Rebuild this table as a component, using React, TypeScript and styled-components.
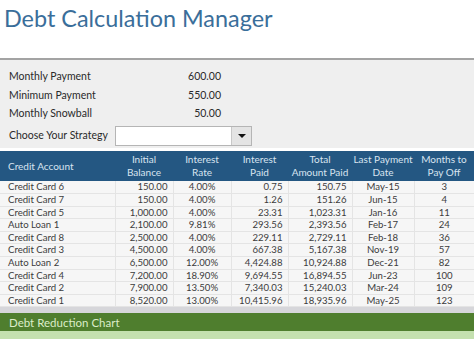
import React from "react";
import styled, { createGlobalStyle } from "styled-components";

const Global = createGlobalStyle`
  html, body { margin: 0; padding: 0; background: #ffffff; }
  body { font-family: Lato, "Open Sans", sans-serif; }
`;

const Page = styled.div`
  width: 474px;
  height: 339px;
  overflow: hidden;
  display: flex;
  flex-direction: column;
  background: #ffffff;
`;

const TitleBar = styled.div`
  height: 58px;
  box-sizing: content-box;
  padding: 0;
  border-bottom: 2px solid #a3a3a3;
  display: flex;
`;

const Title = styled.h1`
  margin: 3px 0 0 4px;
  font-family: Lato, sans-serif;
  font-weight: 400;
  font-size: 23.4px;
  line-height: 30px;
  color: #3a6e9a;
`;

const Summary = styled.div`
  background: #efefef;
  height: 88px;
  box-sizing: border-box;
  padding: 7px 0 0 9px;
  display: grid;
  grid-template-columns: 106px 137px;
  grid-template-rows: 18.5px 18.5px 18.5px auto;
  align-items: center;
  font-size: 10.5px;
  color: #2a2a2a;
`;

const Label = styled.div``;

const Value = styled.div`
  width: 106px;
  text-align: right;
`;

const Select = styled.div`
  margin-top: 2px;
  width: 137px;
  height: 20px;
  box-sizing: border-box;
  border: 1px solid #b5b5b5;
  background: #ffffff;
  display: flex;
  justify-content: flex-end;
`;

const SelectButton = styled.div`
  width: 19px;
  height: 100%;
  background: #e4e4e4;
  border-left: 1px solid #c8c8c8;
  display: flex;
  align-items: center;
  justify-content: center;
`;

const Arrow = styled.div`
  width: 0;
  height: 0;
  border-left: 4px solid transparent;
  border-right: 4px solid transparent;
  border-top: 4px solid #111;
`;

const Gap = styled.div`
  height: 3px;
  background: #ffffff;
`;

const Table = styled.table`
  width: 474px;
  border-collapse: collapse;
  table-layout: fixed;
  font-size: 9.6px;
`;

const HeadCell = styled.th<{ $left?: boolean }>`
  background: #245782;
  color: #d8e4f0;
  font-weight: 400;
  font-size: 10px;
  height: 30px;
  padding: ${(p) => (p.$left ? "0 0 0 8px" : "0")};
  text-align: ${(p) => (p.$left ? "left" : "center")};
  line-height: 13px;
  vertical-align: middle;
  white-space: nowrap;
`;

const Row = styled.tr`
  height: 12.6px;
`;

const Cell = styled.td<{ $align: "left" | "right" | "center" }>`
  background: #f6f6f6;
  color: #3c3c3c;
  border-bottom: 1px solid #e4e4e4;
  border-right: 1px solid #e4e4e4;
  padding: ${(p) => (p.$align === "left" ? "0 0 0 8px" : p.$align === "right" ? "0 5px 0 0" : "0")};
  text-align: ${(p) => p.$align};
  line-height: 11.6px;
  white-space: nowrap;
  &:last-child { border-right: none; }
`;

const GrayStrip = styled.div`
  height: 6px;
  background: #d6d6da;
`;

const ChartBar = styled.div`
  height: 18px;
  background: #4f7e2e;
  color: #dcecc9;
  font-size: 11.5px;
  display: flex;
  align-items: center;
  padding-left: 9px;
`;

const ChartBody = styled.div`
  flex: 1;
  background: #c4e0af;
`;

const widths = [115, 58, 58, 57, 64, 62, 60];

const rows: [string, string, string, string, string, string, string][] = [
  ["Credit Card 6", "150.00", "4.00%", "0.75", "150.75", "May-15", "3"],
  ["Credit Card 7", "150.00", "4.00%", "1.26", "151.26", "Jun-15", "4"],
  ["Credit Card 5", "1,000.00", "4.00%", "23.31", "1,023.31", "Jan-16", "11"],
  ["Auto Loan 1", "2,100.00", "9.81%", "293.56", "2,393.56", "Feb-17", "24"],
  ["Credit Card 8", "2,500.00", "4.00%", "229.11", "2,729.11", "Feb-18", "36"],
  ["Credit Card 3", "4,500.00", "4.00%", "667.38", "5,167.38", "Nov-19", "57"],
  ["Auto Loan 2", "6,500.00", "12.00%", "4,424.88", "10,924.88", "Dec-21", "82"],
  ["Credit Card 4", "7,200.00", "18.90%", "9,694.55", "16,894.55", "Jun-23", "100"],
  ["Credit Card 2", "7,900.00", "13.50%", "7,340.03", "15,240.03", "Mar-24", "109"],
  ["Credit Card 1", "8,520.00", "13.00%", "10,415.96", "18,935.96", "May-25", "123"],
];

const aligns: ("left" | "right" | "center")[] = ["left", "right", "center", "right", "right", "center", "center"];

export default function App() {
  return (
    <>
      <Global />
      <Page>
        <TitleBar>
          <Title>Debt Calculation Manager</Title>
        </TitleBar>
        <Summary>
          <Label>Monthly Payment</Label>
          <Value>600.00</Value>
          <Label>Minimum Payment</Label>
          <Value>550.00</Value>
          <Label>Monthly Snowball</Label>
          <Value>50.00</Value>
          <Label>Choose Your Strategy</Label>
          <Select>
            <SelectButton>
              <Arrow />
            </SelectButton>
          </Select>
        </Summary>
        <Gap />
        <Table>
          <colgroup>
            {widths.map((w, i) => (
              <col key={i} style={{ width: w }} />
            ))}
          </colgroup>
          <thead>
            <tr>
              <HeadCell $left>Credit Account</HeadCell>
              <HeadCell>Initial<br />Balance</HeadCell>
              <HeadCell>Interest<br />Rate</HeadCell>
              <HeadCell>Interest<br />Paid</HeadCell>
              <HeadCell>Total<br />Amount Paid</HeadCell>
              <HeadCell>Last Payment<br />Date</HeadCell>
              <HeadCell>Months to<br />Pay Off</HeadCell>
            </tr>
          </thead>
          <tbody>
            {rows.map((r, i) => (
              <Row key={i}>
                {r.map((c, j) => (
                  <Cell key={j} $align={aligns[j]}>{c}</Cell>
                ))}
              </Row>
            ))}
          </tbody>
        </Table>
        <GrayStrip />
        <ChartBar>Debt Reduction Chart</ChartBar>
        <ChartBody />
      </Page>
    </>
  );
}
